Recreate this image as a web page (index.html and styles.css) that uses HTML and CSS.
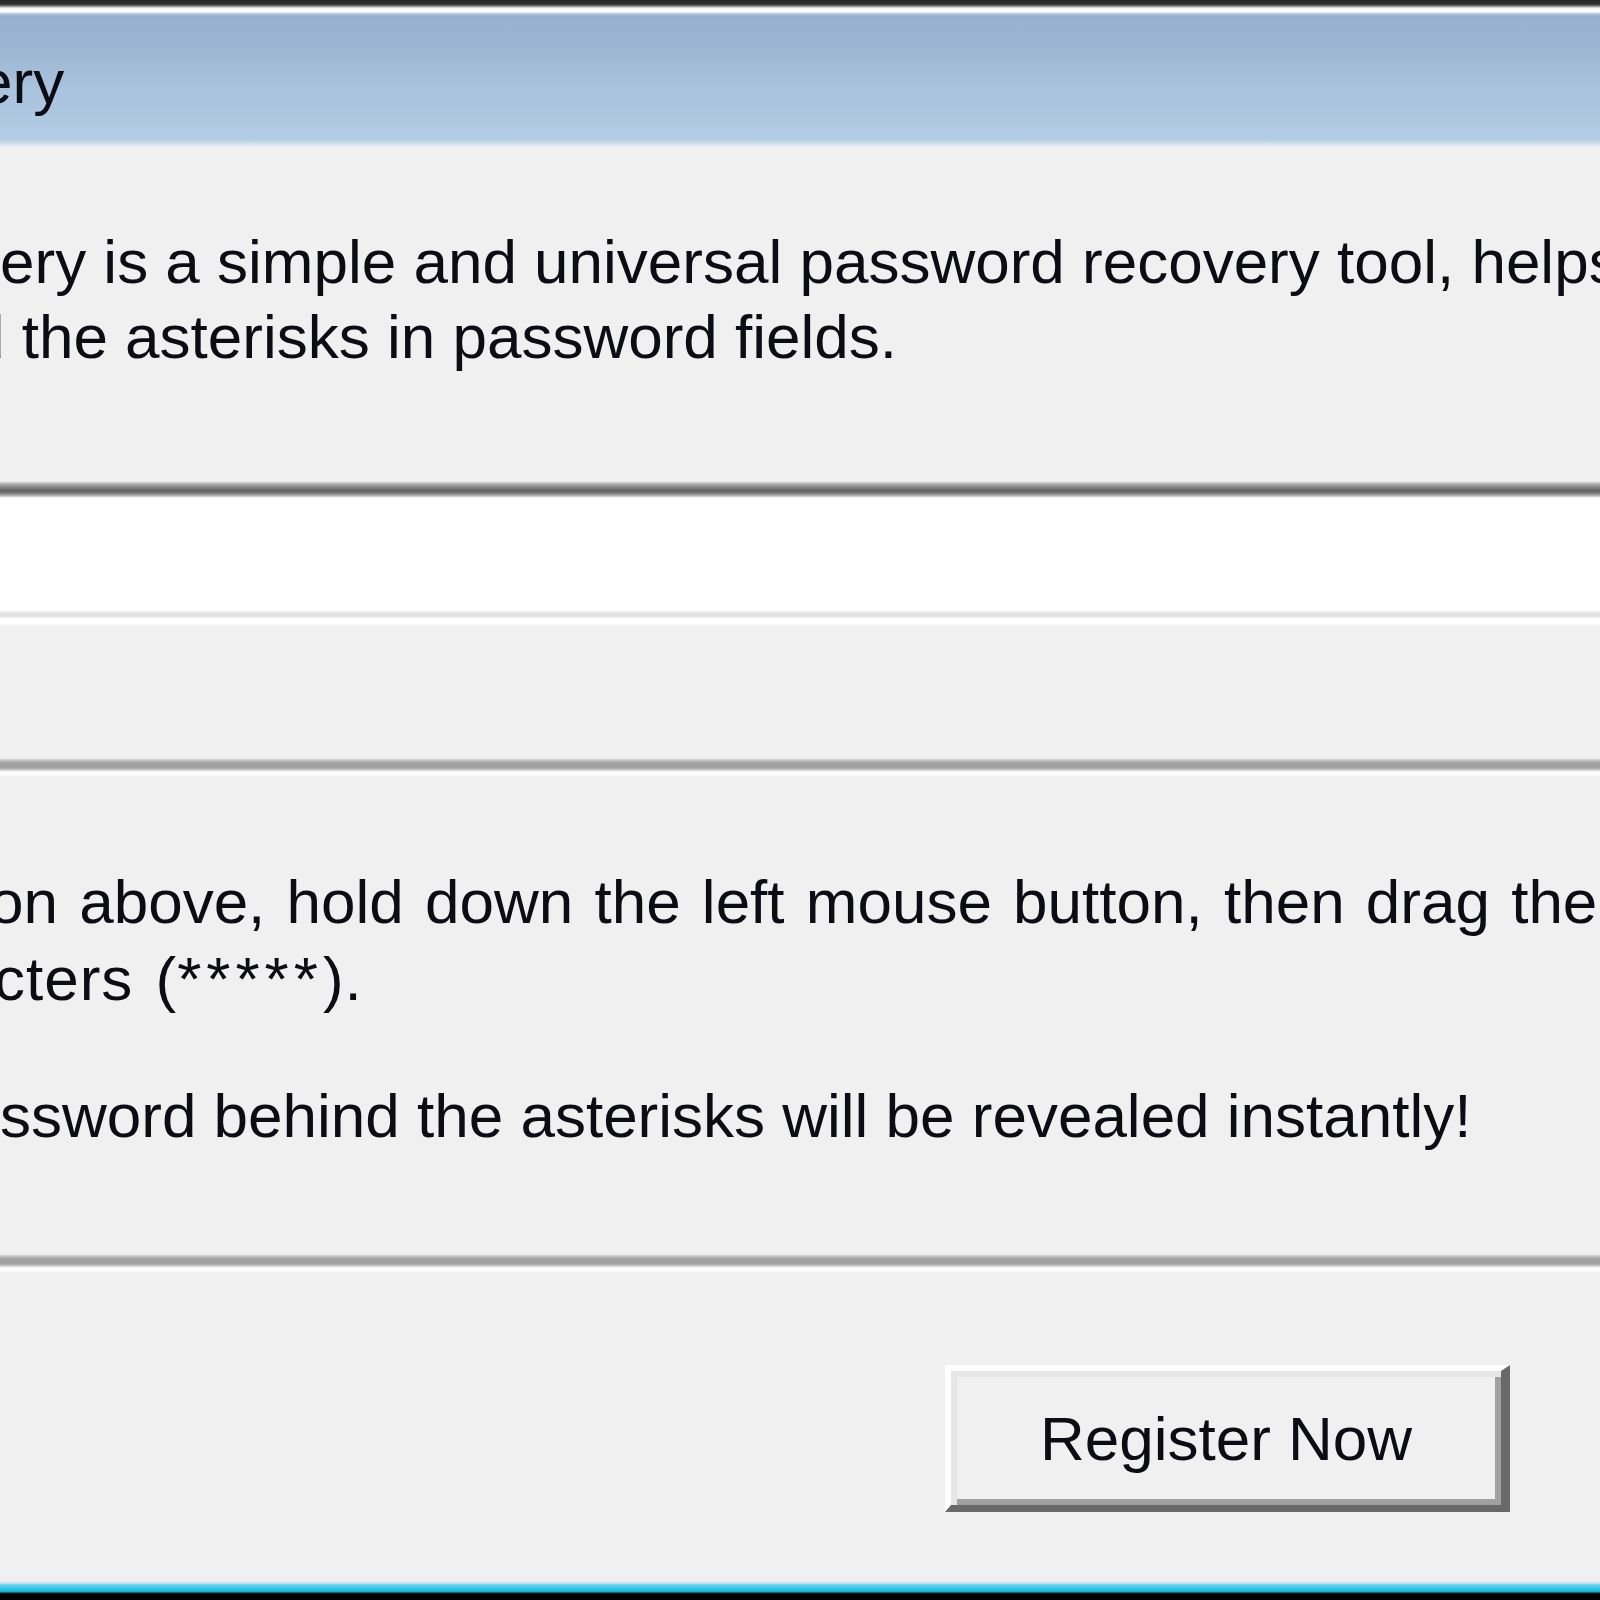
FILE: index.html
```html
<!DOCTYPE html>
<html lang="en">
<head>
  <meta charset="UTF-8">
  <title>Password Recovery</title>
  <link rel="stylesheet" href="styles.css">
</head>
<body>
  <div class="window">
    <div class="titlebar">
      <span class="title">ery</span>
    </div>

    <p class="intro">
      <span class="line">ery is a simple and universal password recovery tool, helps</span>
      <span class="line cut-d">d the asterisks in password fields.</span>
    </p>

    <div class="edit"></div>

    <div class="etched"></div>

    <p class="howto">
      <span class="line cut-o">on above, hold down the left mouse button, then drag the</span>
      <span class="line cut-c">cters (<span class="stars">*****</span>).</span>
    </p>

    <p class="note">ssword behind the asterisks will be revealed instantly!</p>

    <div class="etched low"></div>

    <div class="actions">
      <button class="btn">Register Now</button>
    </div>

    <div class="frame-bottom"></div>
  </div>
</body>
</html>
```

FILE: styles.css
```css
html, body {
  margin: 0;
  height: 100%;
}
body {
  background: #f0f0f0;
  overflow: hidden;
  font-family: "Liberation Sans", Arial, sans-serif;
  font-size: 62px;
  color: #0c0c14;
}
.window {
  display: flex;
  flex-direction: column;
  width: 1600px;
  height: 1600px;
  overflow: hidden;
}
.titlebar {
  height: 147px;
  padding-top: 44px;
  box-sizing: border-box;
  line-height: 75px;
  background: linear-gradient(to bottom,
    #262626 0, #2e2e2e 4px, #7a7a7a 6px, #f4f4f4 8px, #ffffff 12px,
    #c5d3e4 13px, #97b0ce 16px, #9cb5d2 45px, #a9c2dd 90px,
    #b4cde6 140px, #d5e3f0 144px, #f0f0f0 147px);
}
.title {
  display: block;
  margin-left: -22px;
  white-space: nowrap;
}
p {
  margin: 0;
}
.line {
  display: block;
  white-space: nowrap;
}
.intro {
  margin-top: 77px;
  line-height: 75px;
}
.cut-d {
  margin-left: -30px;
}
.cut-o {
  margin-left: -11px;
}
.cut-c {
  margin-left: -6px;
  letter-spacing: 1px;
}
.stars {
  letter-spacing: 5px;
}
.edit {
  margin-top: 104px;
  height: 149px;
  background: linear-gradient(to bottom,
    #f0f0f0 0, #f4f4f4 3px, #b0b0b0 6px, #8a8a8a 9px, #666666 12px,
    #6a6a6a 14px, #a0a0a0 17px, #ffffff 20px, #ffffff 132px,
    #e3e3e3 135px, #e3e3e3 138px, #ffffff 141px, #ffffff 145px, #f0f0f0 149px);
}
.etched {
  margin-top: 131px;
  height: 19px;
  background: linear-gradient(to bottom,
    #f0f0f0 0, #c8c8c8 2px, #a0a0a0 5px, #a0a0a0 10px,
    #d0d0d0 12px, #ffffff 14px, #ffffff 16px, #f0f0f0 19px);
}
.etched.low {
  margin-top: 101px;
}
.howto {
  margin-top: 86px;
  line-height: 77px;
  word-spacing: 4px;
}
.note {
  margin-top: 61px;
  line-height: 75px;
  white-space: nowrap;
}
.actions {
  display: flex;
  justify-content: flex-end;
  padding-top: 92px;
  padding-right: 90px;
}
.btn {
  display: flex;
  align-items: center;
  justify-content: center;
  width: 565px;
  height: 147px;
  padding: 0;
  font: inherit;
  line-height: 75px;
  color: inherit;
  background: #f0f0f0;
  border-style: solid;
  border-width: 6px 9px 7px 6px;
  border-color: #ffffff #696969 #696969 #ffffff;
  box-shadow: inset 6px 6px 0 #e6e6e6, inset -6px -6px 0 #a0a0a0;
}
.frame-bottom {
  margin-top: auto;
  height: 20px;
  background: linear-gradient(to bottom,
    #f0f0f0 0, #d7e4ef 3px, #5fd3ee 5px, #2cc6e6 9px, #1aa8c8 12px,
    #0a2a33 13px, #000000 14px, #000000 20px);
}
```
